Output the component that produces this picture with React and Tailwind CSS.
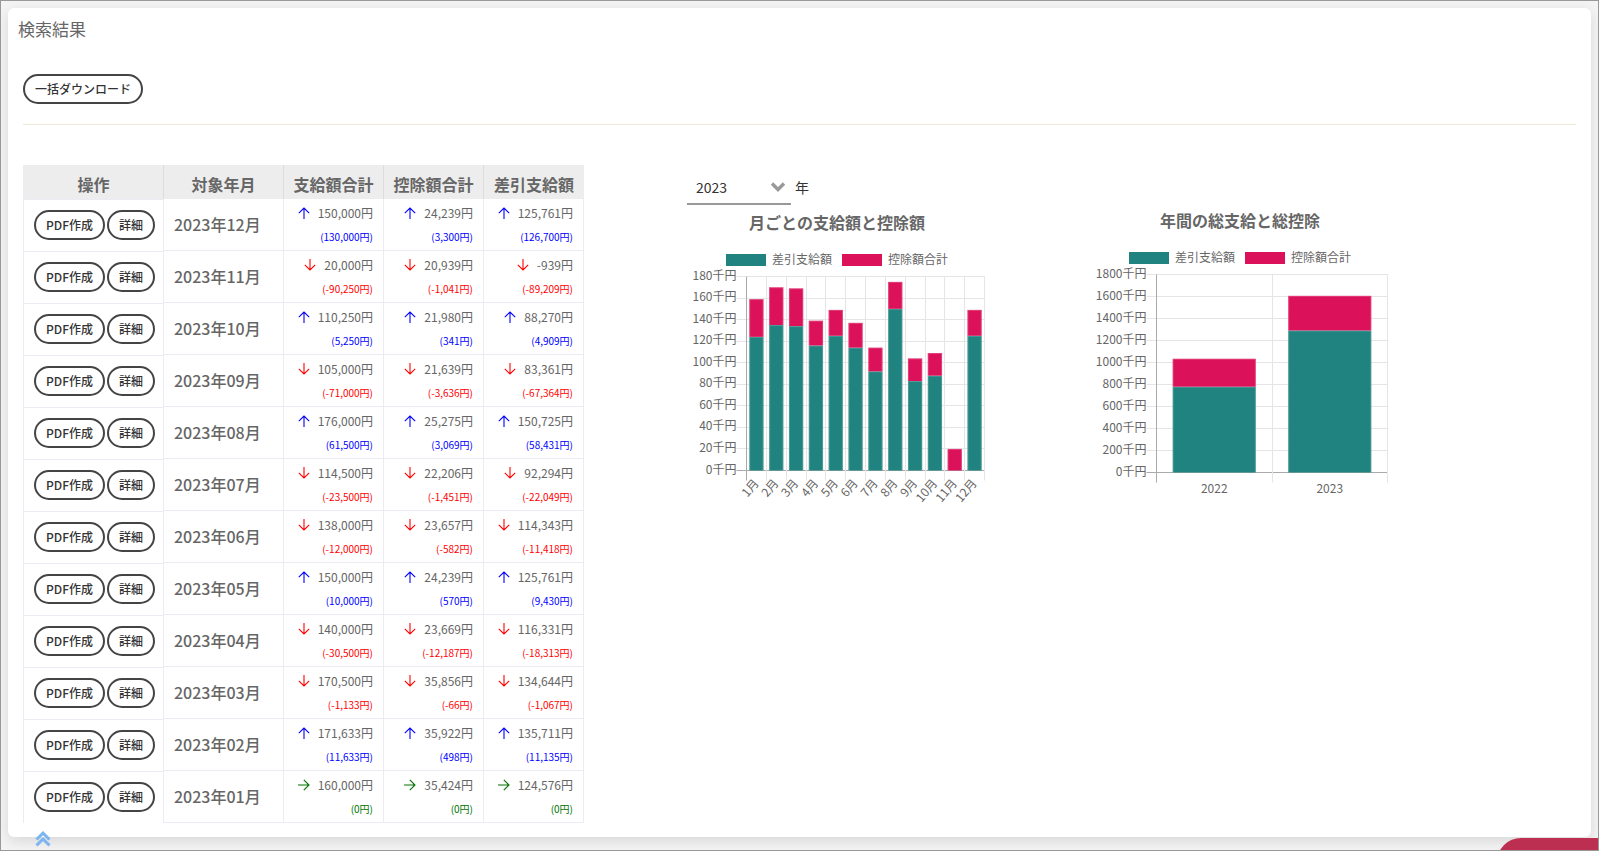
import { useState } from "react";

const months = [
  { ym: "2023年12月", cells: [["up", "150,000", "130,000"], ["up", "24,239", "3,300"], ["up", "125,761", "126,700"]] },
  { ym: "2023年11月", cells: [["down", "20,000", "-90,250"], ["down", "20,939", "-1,041"], ["down", "-939", "-89,209"]] },
  { ym: "2023年10月", cells: [["up", "110,250", "5,250"], ["up", "21,980", "341"], ["up", "88,270", "4,909"]] },
  { ym: "2023年09月", cells: [["down", "105,000", "-71,000"], ["down", "21,639", "-3,636"], ["down", "83,361", "-67,364"]] },
  { ym: "2023年08月", cells: [["up", "176,000", "61,500"], ["up", "25,275", "3,069"], ["up", "150,725", "58,431"]] },
  { ym: "2023年07月", cells: [["down", "114,500", "-23,500"], ["down", "22,206", "-1,451"], ["down", "92,294", "-22,049"]] },
  { ym: "2023年06月", cells: [["down", "138,000", "-12,000"], ["down", "23,657", "-582"], ["down", "114,343", "-11,418"]] },
  { ym: "2023年05月", cells: [["up", "150,000", "10,000"], ["up", "24,239", "570"], ["up", "125,761", "9,430"]] },
  { ym: "2023年04月", cells: [["down", "140,000", "-30,500"], ["down", "23,669", "-12,187"], ["down", "116,331", "-18,313"]] },
  { ym: "2023年03月", cells: [["down", "170,500", "-1,133"], ["down", "35,856", "-66"], ["down", "134,644", "-1,067"]] },
  { ym: "2023年02月", cells: [["up", "171,633", "11,633"], ["up", "35,922", "498"], ["up", "135,711", "11,135"]] },
  { ym: "2023年01月", cells: [["flat", "160,000", "0"], ["flat", "35,424", "0"], ["flat", "124,576", "0"]] },
];

// [label, 差引支給額, 控除額合計] in 千円
const monthly = [
  ["1月", 124, 35], ["2月", 135, 35], ["3月", 134, 35], ["4月", 116, 23],
  ["5月", 125, 24], ["6月", 114, 23], ["7月", 92, 22], ["8月", 150, 25],
  ["9月", 83, 21], ["10月", 88, 21], ["11月", 0, 20], ["12月", 125, 24],
];

const yearly = [["2022", 780, 254], ["2023", 1291, 315]];

const colors = {
  up: "text-[#0000ff]",
  down: "text-[#ff0000]",
  flat: "text-[#007500]",
};

const arrows = {
  up: "M6 12V1M.8 6.2 6 1l5.2 5.2",
  down: "M6 0v11M.8 5.8 6 11l5.2-5.2",
  flat: "M0 6h11M5.8.8 11 6l-5.2 5.2",
};

function Arrow({ dir }) {
  return (
    <svg width="12" height="12" viewBox="0 0 12 12" fill="none" className={colors[dir]}>
      <path d={arrows[dir]} stroke="currentColor" strokeWidth="1.1" />
    </svg>
  );
}

function PillButton({ children }) {
  return (
    <button
      type="button"
      className="h-[30px] px-2.5 rounded-full border-2 border-[#444] bg-white text-xs font-medium text-[#333] whitespace-nowrap hover:bg-gray-100"
    >
      {children}
    </button>
  );
}

function ResultTable() {
  return (
    <table className="w-[561px] shrink-0 table-fixed border-separate border-spacing-0 text-[#666]">
      <colgroup>
        <col className="w-[140px]" />
        <col className="w-[120px]" />
        <col className="w-[100px]" />
        <col className="w-[100px]" />
        <col className="w-[101px]" />
      </colgroup>
      <thead>
        <tr className="bg-[#ededed] text-base">
          {["操作", "対象年月", "支給額合計", "控除額合計", "差引支給額"].map((h) => (
            <th key={h} className="h-[34px] pt-1 leading-6 font-bold border-l border-[#ddd] first:border-[#ebebf3]">
              {h}
            </th>
          ))}
        </tr>
      </thead>
      <tbody>
        {months.map((m) => (
          <tr key={m.ym}>
            <td className="h-[52px] border-l border-t border-[#ebebf3] pl-2.5 pb-0.5">
              <div className="flex gap-0.5">
                <PillButton>PDF作成</PillButton>
                <PillButton>詳細</PillButton>
              </div>
            </td>
            <td className="border-l border-b border-[#ebebf3] pl-2.5 pb-0.5 text-base font-medium">{m.ym}</td>
            {m.cells.map(([dir, amount, diff], i) => (
              <td key={i} className="h-[52px] border-l border-b last:border-r border-[#ebebf3] pr-2.5 text-right align-top">
                <div className="flex items-center justify-end gap-2 h-7 text-xs">
                  <Arrow dir={dir} />
                  {amount}円
                </div>
                <div className={`${colors[dir]} text-[10px] leading-5`}>({diff}円)</div>
              </td>
            ))}
          </tr>
        ))}
      </tbody>
    </table>
  );
}

function StackedChart({ title, data, max, step, left, bottom, rotate }) {
  const top = 10.5;
  const right = 297.5;
  const slot = (right - left) / data.length;
  const barW = slot * 0.72;
  const y = (v) => bottom - (v / max) * (bottom - top);
  const ticks = [];
  for (let v = 0; v <= max; v += step) ticks.push(v);

  return (
    <figure className="w-[300px] text-[#666]">
      <figcaption className="h-9 leading-[34px] text-base font-bold text-center">{title}</figcaption>
      <div className="flex justify-center gap-2.5 pt-[13px] text-xs leading-[10px]">
        <span className="flex gap-1.5"><i className="w-10 h-3 bg-[#21837f]" />差引支給額</span>
        <span className="flex gap-1.5"><i className="w-10 h-3 bg-[#db1159]" />控除額合計</span>
      </div>
      <svg width="300" height="245" viewBox="0 0 300 245" className="block overflow-visible" fontSize="12" fill="#666">
        {ticks.map((v) => (
          <g key={v}>
            <line x1={left - 10} x2={right} y1={Math.floor(y(v)) + 0.5} y2={Math.floor(y(v)) + 0.5} stroke={v ? "#e5e5e5" : "#aaa"} />
            <text x={left - 10} y={y(v) + 3} textAnchor="end">{v}千円</text>
          </g>
        ))}
        {[...data, null].map((_, i) => {
          const x = Math.floor(left + slot * i) + 0.5;
          return <line key={i} x1={x} x2={x} y1={top} y2={bottom + 10} stroke={i ? "#e5e5e5" : "#aaa"} />;
        })}
        {data.map(([label, net, ded], i) => {
          const cx = left + slot * (i + 0.5);
          const x = cx - barW / 2;
          const bars = [[0, net, "#21837f"], [net, net + ded, "#db1159"]];
          return (
            <g key={label}>
              {bars.map(([from, to, fill]) => to > from && (
                <g key={fill}>
                  <rect x={x} y={y(to)} width={barW} height={y(from) - y(to)} fill={fill} />
                  <path
                    d={`M${x + 0.5} ${y(from)}V${y(to) + 0.5}H${x + barW - 0.5}V${y(from)}`}
                    fill="none" stroke="#fff" strokeOpacity="0.2"
                  />
                </g>
              ))}
              {rotate ? (
                <text textAnchor="end" transform={`translate(${cx + 3} ${bottom + 13}) rotate(-50)`}>{label}</text>
              ) : (
                <text x={cx} y={bottom + 20} textAnchor="middle">{label}</text>
              )}
            </g>
          );
        })}
      </svg>
    </figure>
  );
}

export default function App() {
  const [year, setYear] = useState("2023");

  return (
    <div className="min-h-screen border border-[#999] bg-[#f4f4f4] p-[7px] pb-[13px] font-['Noto_Sans_CJK_JP',sans-serif]">
      <main className="rounded-md bg-white pb-3.5 shadow-[0_4px_14px_rgba(0,0,0,0.12)]">
        <h1 className="px-2.5 pt-[9px] text-[17px] leading-6 text-[#666]">検索結果</h1>
        <div className="mx-[15px] mt-[33px] border-b border-[#efe8d8] pb-5">
          <PillButton>一括ダウンロード</PillButton>
        </div>

        <div className="mx-[15px] mt-10 flex items-start">
          <ResultTable />
          <section className="ml-[103px]">
            <div className="flex h-10 items-end text-sm text-[#333]">
              <div className="relative">
                <select
                  id="year"
                  value={year}
                  onChange={(e) => setYear(e.target.value)}
                  className="h-9 w-[104px] appearance-none border-b-2 border-[#999] bg-transparent pl-[9px] pt-0.5"
                >
                  <option>2023</option>
                  <option>2022</option>
                </select>
                <svg width="16" height="12" viewBox="0 0 16 12" fill="none" className="pointer-events-none absolute right-[5px] top-3">
                  <path d="M2 2.5 8 8.5l6-6" stroke="#999" strokeWidth="3.4" />
                </svg>
              </div>
              <label htmlFor="year" className="ml-1 h-9 leading-9">年</label>
            </div>
            <StackedChart title="月ごとの支給額と控除額" data={monthly} max={180} step={20} left={59.5} bottom={204.5} rotate />
          </section>
          <section className="ml-[103px] mt-[38px]">
            <StackedChart title="年間の総支給と総控除" data={yearly} max={1800} step={200} left={66.5} bottom={208.5} />
          </section>
        </div>
      </main>

      <a href="#root" aria-label="上へ" className="fixed bottom-1 left-[35px] text-[#7cb5f0]">
        <svg width="16" height="16" viewBox="0 0 16 16" fill="none" className="block">
          <path d="M1.5 8.5 8 2.2l6.5 6.3M1.5 14.3 8 8l6.5 6.3" stroke="currentColor" strokeWidth="3" />
        </svg>
      </a>
      <button type="button" aria-label="メニュー" className="fixed -bottom-[35px] right-px h-12 w-[101px] rounded-tl-[24px] bg-[#bc2f50]" />
      <div className="pointer-events-none fixed inset-0 border border-[#999]" />
    </div>
  );
}
